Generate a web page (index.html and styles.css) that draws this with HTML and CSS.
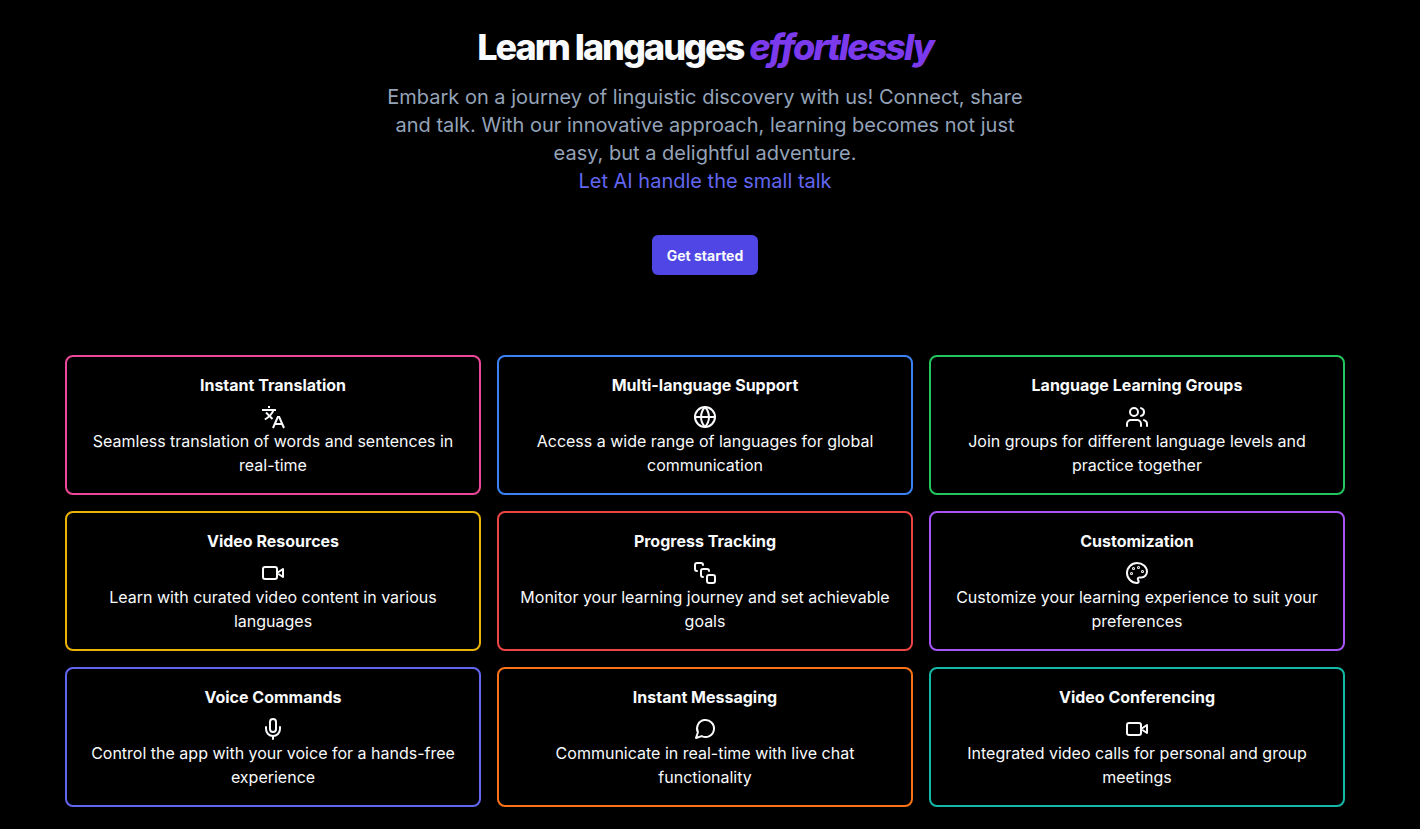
FILE: index.html
```html
<!DOCTYPE html>
<html lang="en">
<head>
    <meta charset="UTF-8">
    <meta name="viewport" content="width=device-width, initial-scale=1.0">
    <title>Learn languages</title>
    <link rel="stylesheet" href="styles.css">
</head>
<body>
<!-- Hero -->
<header class="hero">
    <h1>Learn langauges <em>effortlessly</em></h1>
    <p class="hero-text">
        Embark on a journey of linguistic discovery with us! Connect, share and talk.
        With our innovative approach, learning becomes not just easy, but a delightful adventure.
        <span class="tagline">Let AI handle the small talk</span>
    </p>
    <button type="button" class="start-button">Get started</button>
</header>

<!-- Features -->
<main class="features">
    <section class="card pink">
        <h2>Instant Translation</h2>
        <svg class="icon square" viewBox="0 0 24 24" aria-hidden="true">
            <path d="M8 1v2M1 5h14"/>
            <path d="M12.500 5c-1 3-3.500 6.500-8.700 9.500"/>
            <path d="M5 7.500l6.500 6.500"/>
            <path d="M12 23l4.800-11h1.400L23 23M14 19h7"/>
        </svg>
        <p>Seamless translation of words and sentences in real-time</p>
    </section>
    <section class="card blue">
        <h2>Multi-language Support</h2>
        <svg class="icon" viewBox="0 0 24 24" aria-hidden="true">
            <circle cx="12" cy="12" r="10"/>
            <path d="M2 12h20"/>
            <path d="M12 2a15.3 15.3 0 0 1 4 10 15.3 15.3 0 0 1-4 10 15.3 15.3 0 0 1-4-10 15.3 15.3 0 0 1 4-10z"/>
        </svg>
        <p>Access a wide range of languages for global communication</p>
    </section>
    <section class="card green">
        <h2>Language Learning Groups</h2>
        <svg class="icon" viewBox="0 0 24 24" aria-hidden="true">
            <path d="M16 21v-2a4 4 0 0 0-4-4H6a4 4 0 0 0-4 4v2"/>
            <circle cx="9" cy="7" r="4"/>
            <path d="M22 21v-2a4 4 0 0 0-3-3.870"/>
            <path d="M16 3.130a4 4 0 0 1 0 7.750"/>
        </svg>
        <p>Join groups for different language levels and practice together</p>
    </section>
    <section class="card yellow">
        <h2>Video Resources</h2>
        <svg class="icon" viewBox="0 0 24 24" aria-hidden="true">
            <path d="m22 8-6 4 6 4V8Z"/>
            <rect width="14" height="12" x="2" y="6" rx="2"/>
        </svg>
        <p>Learn with curated video content in various languages</p>
    </section>
    <section class="card red">
        <h2>Progress Tracking</h2>
        <svg class="icon" viewBox="0 0 24 24" aria-hidden="true">
            <path d="M4 10c-1.100 0-2-.9-2-2V4c0-1.100.9-2 2-2h4c1.100 0 2 .9 2 2"/>
            <path d="M10 16c-1.100 0-2-.9-2-2v-4c0-1.100.9-2 2-2h4c1.100 0 2 .9 2 2"/>
            <rect width="8" height="8" x="14" y="14" rx="2"/>
        </svg>
        <p>Monitor your learning journey and set achievable goals</p>
    </section>
    <section class="card purple">
        <h2>Customization</h2>
        <svg class="icon" viewBox="0 0 24 24" aria-hidden="true">
            <circle cx="13.500" cy="6.500" r=".5"/>
            <circle cx="17.500" cy="10.500" r=".5"/>
            <circle cx="8.500" cy="7.500" r=".5"/>
            <circle cx="6.500" cy="12.500" r=".5"/>
            <path d="M12 2C6.500 2 2 6.500 2 12s4.500 10 10 10c.926 0 1.648-.746 1.648-1.688 0-.437-.18-.835-.437-1.125-.29-.289-.438-.652-.438-1.125a1.640 1.640 0 0 1 1.668-1.668h1.996c3.051 0 5.555-2.503 5.555-5.554C21.965 6.012 17.461 2 12 2z"/>
        </svg>
        <p>Customize your learning experience to suit your preferences</p>
    </section>
    <section class="card indigo">
        <h2>Voice Commands</h2>
        <svg class="icon" viewBox="0 0 24 24" aria-hidden="true">
            <path d="M12 2a3 3 0 0 0-3 3v7a3 3 0 0 0 6 0V5a3 3 0 0 0-3-3Z"/>
            <path d="M19 10v2a7 7 0 0 1-14 0v-2"/>
            <path d="M12 19v3"/>
        </svg>
        <p>Control the app with your voice for a hands-free experience</p>
    </section>
    <section class="card orange">
        <h2>Instant Messaging</h2>
        <svg class="icon" viewBox="0 0 24 24" aria-hidden="true">
            <path d="m3 21 1.900-5.700a8.500 8.500 0 1 1 3.800 3.800z"/>
        </svg>
        <p>Communicate in real-time with live chat functionality</p>
    </section>
    <section class="card teal">
        <h2>Video Conferencing</h2>
        <svg class="icon" viewBox="0 0 24 24" aria-hidden="true">
            <path d="m22 8-6 4 6 4V8Z"/>
            <rect width="14" height="12" x="2" y="6" rx="2"/>
        </svg>
        <p>Integrated video calls for personal and group meetings</p>
    </section>
</main>
</body>
</html>
```
FILE: styles.css
```css
* {
    box-sizing: border-box;
}

body {
    margin: 0;
    padding: 27px 10px 20px 0;
    background-color: #000;
    color: #f8fafc;
    font-family: Inter, "Liberation Sans", sans-serif;
    font-size: 16px;
    line-height: 24px;
}

h1,
h2,
p {
    margin: 0;
}

/* Hero */
.hero {
    display: flex;
    flex-direction: column;
    align-items: center;
    text-align: center;
    margin-bottom: 80px;
}

h1 {
    font-size: 36px;
    line-height: 40px;
    font-weight: 800;
    letter-spacing: -2px;
    word-spacing: normal;
    margin-bottom: 16px;
}

h1 em {
    color: #7c3aed;
}

.hero-text {
    max-width: 640px;
    margin-bottom: 40px;
    color: #94a3b8;
    font-size: 20px;
    line-height: 28px;
}

.tagline {
    display: block;
    color: #6366f1;
}

.start-button {
    height: 40px;
    padding: 0 15px;
    border: none;
    border-radius: 6px;
    background-color: #4f46e5;
    color: #f8fafc;
    font-family: inherit;
    font-size: 14px;
    font-weight: 700;
    cursor: pointer;
}

.start-button:hover {
    background-color: #4338ca;
}

/* Feature cards */
.features {
    display: grid;
    grid-template-columns: repeat(3, 1fr);
    gap: 16px;
    max-width: 1280px;
    margin: 0 auto;
}

.card {
    display: flex;
    flex-direction: column;
    align-items: center;
    padding: 16px;
    border: 2px solid;
    border-radius: 8px;
    text-align: center;
}

.card h2 {
    margin-bottom: 8px;
    font-size: 16px;
    line-height: 24px;
    font-weight: 700;
}

.card h2,
.card p,
.icon {
    color: #f8fafc;
}

.icon {
    width: 24px;
    height: 24px;
    fill: none;
    stroke: currentColor;
    stroke-width: 2;
    stroke-linecap: round;
    stroke-linejoin: round;
}

.icon.square {
    stroke-linecap: butt;
    stroke-linejoin: miter;
}

.pink { border-color: #ec4899; }
.blue { border-color: #3b82f6; }
.green { border-color: #22c55e; }
.yellow { border-color: #eab308; }
.red { border-color: #ef4444; }
.purple { border-color: #a855f7; }
.indigo { border-color: #6366f1; }
.orange { border-color: #f97316; }
.teal { border-color: #14b8a6; }

@media (max-width: 900px) {
    .features {
        grid-template-columns: 1fr;
        padding: 0 16px;
    }
}
```
